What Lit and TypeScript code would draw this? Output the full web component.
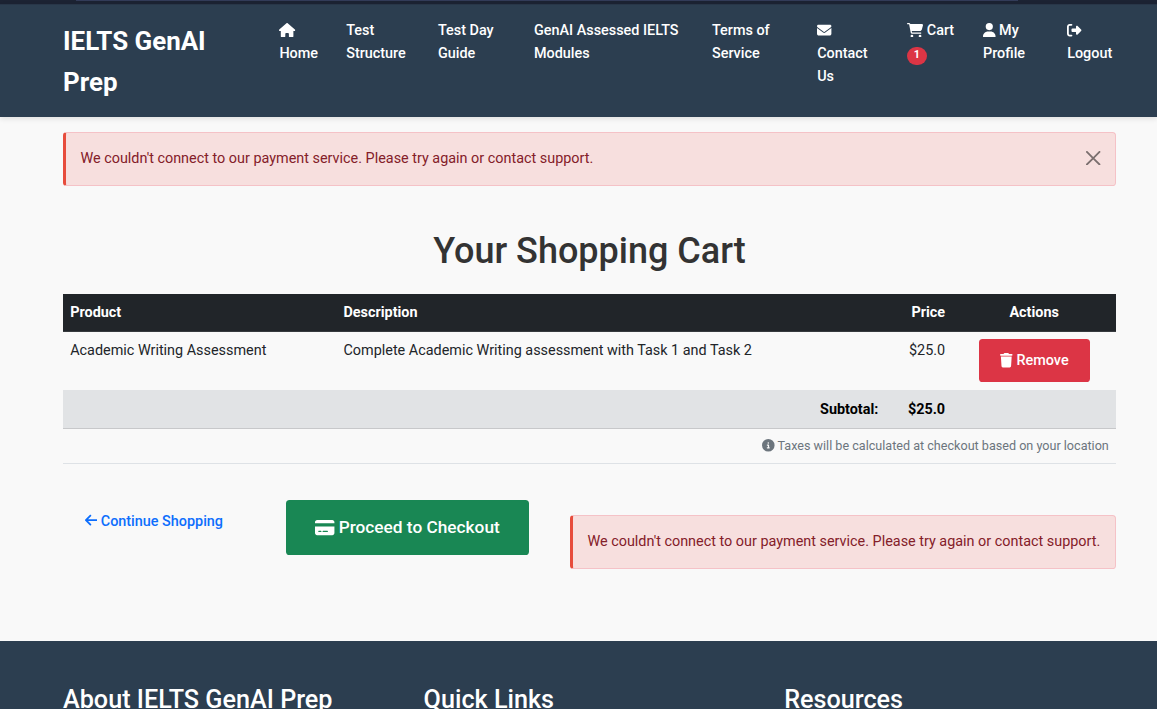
import { LitElement, html, css, svg } from "lit";
import { customElement, property } from "lit/decorators.js";

type Icon = { w: number; d: string };

const ICONS: Record<string, Icon> = {
  home: { w: 576, d: "M575.8 255.5c0 18-15 32.1-32 32.1h-32l.7 160.2c0 2.7-.2 5.4-.5 8.1V472c0 22.1-17.9 40-40 40H456c-1.1 0-2.2 0-3.3-.1c-1.4 .1-2.8 .1-4.2 .1H416 392c-22.1 0-40-17.9-40-40V448 384c0-17.7-14.3-32-32-32H256c-17.7 0-32 14.3-32 32v64 24c0 22.1-17.9 40-40 40H160 128.1c-1.5 0-3-.1-4.5-.2c-1.2 .1-2.4 .2-3.6 .2H104c-22.1 0-40-17.9-40-40V360c0-.9 0-1.9 .1-2.8V287.6H32c-18 0-32-14-32-32.1c0-9 3-17 10-24L266.4 8c7-7 15-8 22-8s15 2 21 7L564.8 231.5c8 7 12 15 11 24z" },
  envelope: { w: 512, d: "M48 64C21.5 64 0 85.5 0 112c0 15.1 7.1 29.3 19.2 38.4L236.8 313.6c11.4 8.5 27 8.5 38.4 0L492.8 150.4c12.1-9.1 19.2-23.3 19.2-38.4c0-26.5-21.5-48-48-48H48zM0 176V384c0 35.3 28.7 64 64 64H448c35.3 0 64-28.7 64-64V176L294.4 339.2c-22.8 17.1-54 17.1-76.8 0L0 176z" },
  cart: { w: 576, d: "M0 24C0 10.7 10.7 0 24 0H69.5c22 0 41.5 12.8 50.6 32h411c26.3 0 45.5 25 38.6 50.4l-41 152.3c-8.5 31.4-37 53.3-69.5 53.3H170.7l5.4 28.5c2.2 11.3 12.1 19.5 23.6 19.5H488c13.3 0 24 10.7 24 24s-10.7 24-24 24H199.7c-34.6 0-64.3-24.6-70.7-58.5L77.4 54.5c-.7-3.8-4-6.5-7.9-6.5H24C10.7 48 0 37.3 0 24zM128 464a48 48 0 1 1 96 0 48 48 0 1 1 -96 0zm336-48a48 48 0 1 1 0 96 48 48 0 1 1 0-96z" },
  user: { w: 448, d: "M224 256A128 128 0 1 0 224 0a128 128 0 1 0 0 256zm-45.7 48C79.8 304 0 383.8 0 482.3C0 498.7 13.3 512 29.7 512H418.3c16.4 0 29.7-13.3 29.7-29.7C448 383.8 368.2 304 269.7 304H178.3z" },
  logout: { w: 512, d: "M377.9 105.9L500.7 228.7c7.2 7.2 11.3 17.1 11.3 27.3s-4.1 20.1-11.3 27.3L377.9 406.1c-6.4 6.4-15 9.9-24 9.9c-18.7 0-33.9-15.2-33.9-33.9l0-62.1-128 0c-17.7 0-32-14.3-32-32l0-64c0-17.7 14.3-32 32-32l128 0 0-62.1c0-18.7 15.2-33.9 33.9-33.9c9 0 17.6 3.6 24 9.9zM160 96L96 96c-17.7 0-32 14.3-32 32l0 256c0 17.7 14.3 32 32 32l64 0c17.7 0 32 14.3 32 32s-14.3 32-32 32l-64 0c-53 0-96-43-96-96L0 128C0 75 43 32 96 32l64 0c17.7 0 32 14.3 32 32s-14.3 32-32 32z" },
  trash: { w: 448, d: "M135.2 17.7L128 32H32C14.3 32 0 46.3 0 64S14.3 96 32 96H416c17.7 0 32-14.3 32-32s-14.3-32-32-32H320l-7.2-14.3C307.4 6.8 296.3 0 284.2 0H163.8c-12.1 0-23.2 6.8-28.6 17.7zM416 128H32L53.2 467c1.6 25.3 22.6 45 47.9 45H346.9c25.3 0 46.3-19.7 47.9-45L416 128z" },
  arrow: { w: 448, d: "M9.4 233.4c-12.5 12.5-12.5 32.8 0 45.3l160 160c12.5 12.5 32.8 12.5 45.3 0s12.5-32.8 0-45.3L109.2 288 416 288c17.7 0 32-14.3 32-32s-14.3-32-32-32l-306.7 0L214.6 118.6c12.5-12.5 12.5-32.8 0-45.3s-32.8-12.5-45.3 0l-160 160z" },
  card: { w: 576, d: "M64 32C28.7 32 0 60.7 0 96v32H576V96c0-35.3-28.7-64-64-64H64zM576 224H0V416c0 35.3 28.7 64 64 64H512c35.3 0 64-28.7 64-64V224zM112 352h64c8.8 0 16 7.2 16 16s-7.2 16-16 16H112c-8.8 0-16-7.2-16-16s7.2-16 16-16zm112 16c0-8.8 7.2-16 16-16H368c8.8 0 16 7.2 16 16s-7.2 16-16 16H240c-8.8 0-16-7.2-16-16z" },
  info: { w: 512, d: "M256 512A256 256 0 1 0 256 0a256 256 0 1 0 0 512zM216 336h24V272H216c-13.3 0-24-10.7-24-24s10.7-24 24-24h48c13.3 0 24 10.7 24 24v88h8c13.3 0 24 10.7 24 24s-10.7 24-24 24H216c-13.3 0-24-10.7-24-24s10.7-24 24-24zm40-208a32 32 0 1 1 0 64 32 32 0 1 1 0-64z" },
};

@customElement("fa-icon")
class FaIcon extends LitElement {
  static styles = css`
    :host { display: inline-block; line-height: 1; height: 1em; vertical-align: -0.125em; }
    svg { display: block; height: 1em; width: auto; fill: currentColor; }
  `;
  @property() name = "home";
  render() {
    const icon = ICONS[this.name];
    return html`<svg viewBox="0 0 ${icon.w} 512">${svg`<path d=${icon.d}></path>`}</svg>`;
  }
}

@customElement("error-alert")
class ErrorAlert extends LitElement {
  static styles = css`
    :host { display: block; }
    .alert {
      box-sizing: border-box; height: 54px; display: flex; align-items: flex-start;
      justify-content: space-between; padding: 14px 14.4px;
      border: 1px solid #f5c2c7; border-left: 3px solid #e74c3c; border-radius: 3.6px;
      background: #f7dfde; color: #842029; white-space: nowrap;
    }
    .close { width: 14.4px; height: 14.4px; margin-top: 4px; fill: #000; opacity: .5; }
  `;
  @property({ type: Boolean }) dismissible = false;
  render() {
    return html`<div class="alert" role="alert">
      <span>We couldn't connect to our payment service. Please try again or contact support.</span>
      ${this.dismissible
        ? html`<svg class="close" viewBox="0 0 16 16"><path d="M.293.293a1 1 0 0 1 1.414 0L8 6.586 14.293.293a1 1 0 1 1 1.414 1.414L9.414 8l6.293 6.293a1 1 0 0 1-1.414 1.414L8 9.414l-6.293 6.293a1 1 0 0 1-1.414-1.414L6.586 8 .293 1.707a1 1 0 0 1 0-1.414z"/></svg>`
        : null}
    </div>`;
  }
}

@customElement("app-root")
class AppRoot extends LitElement {
  static styles = css`
    :host {
      display: block; height: 709px; overflow: hidden; background: #f9f9f9; color: #212529;
      font: 400 14.4px/23.04px Roboto, sans-serif;
    }
    .chrome { height: 4px; background: #1c2333; }
    .tab-edge { height: 1px; margin: 0 139px 0 76px; background: #323b58; }
    .nav {
      box-sizing: border-box; height: 113px; padding: 14.4px 0 0 63px; background: #2c3e50;
      border-top: 1px solid #283648; box-shadow: 0 2px 5px rgba(0,0,0,.1);
      display: grid; grid-template-columns: 216.4px 66.8px 91.8px 96px 178px 105.2px 89.8px 76px 84.2px 90px;
      color: #fff; font-weight: 500;
    }
    .brand { font-size: 25.92px; line-height: 41px; font-weight: 700; margin-top: 2px; }
    .badge {
      display: block; box-sizing: border-box; width: 20px; height: 18px; border-radius: 9px;
      margin-top: 5px; background: #dc3545; font-size: 10.8px; line-height: 15px; font-weight: 700;
      text-align: center;
    }
    .main { box-sizing: border-box; padding: 15px 41px 0 63px; height: 524px; }
    h1 { margin: 44px 0 21px; font-size: 36px; line-height: 43px; font-weight: 500; color: #333; text-align: center; }
    .row {
      display: grid; grid-template-columns: 273.3px 533px 83px 1fr; box-sizing: border-box;
    }
    .cell { padding: 7px 7.2px; }
    .right { text-align: right; }
    .head { height: 38px; background: #212529; color: #fff; font-weight: 700; border-bottom: 1px solid #373b3e; }
    .center { text-align: center; }
    .item { height: 58px; }
    .item .action { padding: 7px 26px 7px 26.7px; }
    .remove {
      height: 43px; border-radius: 3.6px; background: #dc3545; color: #fff; font-weight: 500;
      display: flex; align-items: center; justify-content: center; gap: 3.5px;
    }
    .subtotal { height: 39px; background: #e1e3e5; color: #000; font-weight: 700; border-bottom: 1px solid #c7c8ca; }
    .subtotal .cell { padding-top: 8px; }
    .subtotal .label { grid-column: 1 / 3; padding-right: 0; margin-right: -9px; }
    .tax {
      height: 35px; box-sizing: border-box; border-bottom: 1px solid #dee2e6; padding: 5px 7.2px;
      text-align: right; color: #6c757d; font-size: 12.6px;
    }
    .actions { display: flex; align-items: flex-start; margin-top: 36px; }
    .continue { box-sizing: border-box; width: 223px; flex: none; padding: 10px 0 0 21.6px; color: #0d6efd; font-weight: 500; }
    .checkout {
      width: 243px; flex: none; height: 55px; border-radius: 3.6px; background: #198754; color: #fff;
      font-size: 17.28px; font-weight: 500; display: flex; align-items: center; justify-content: center; gap: 4px;
    }
    .inline-alert { flex: 1; margin: 15px 0 0 41px; }
    .footer {
      height: 83px; box-sizing: border-box; padding: 44px 0 0 63px; background: #2c3e50; color: #fff;
      display: grid; grid-template-columns: 360.6px 360.6px 1fr; white-space: nowrap;
      font-size: 25.2px; line-height: 30px; font-weight: 500;
    }
  `;

  render() {
    return html`
      <div class="chrome"><div class="tab-edge"></div></div>
      <nav class="nav">
        <div class="brand">IELTS GenAI<br />Prep</div>
        <div><fa-icon name="home"></fa-icon><br />Home</div>
        <div>Test<br />Structure</div>
        <div>Test Day<br />Guide</div>
        <div>GenAI Assessed IELTS<br />Modules</div>
        <div>Terms of<br />Service</div>
        <div><fa-icon name="envelope"></fa-icon><br />Contact<br />Us</div>
        <div><fa-icon name="cart"></fa-icon> Cart<span class="badge">1</span></div>
        <div><fa-icon name="user"></fa-icon> My<br />Profile</div>
        <div><fa-icon name="logout"></fa-icon><br />Logout</div>
      </nav>
      <main class="main">
        <error-alert dismissible></error-alert>
        <h1>Your Shopping Cart</h1>
        <div class="row head">
          <div class="cell">Product</div>
          <div class="cell">Description</div>
          <div class="cell right">Price</div>
          <div class="cell center">Actions</div>
        </div>
        <div class="row item">
          <div class="cell">Academic Writing Assessment</div>
          <div class="cell">Complete Academic Writing assessment with Task 1 and Task 2</div>
          <div class="cell right">$25.0</div>
          <div class="action"><div class="remove"><fa-icon name="trash"></fa-icon>Remove</div></div>
        </div>
        <div class="row subtotal">
          <div class="cell label right">Subtotal:</div>
          <div class="cell right">$25.0</div>
        </div>
        <div class="tax"><fa-icon name="info"></fa-icon> Taxes will be calculated at checkout based on your location</div>
        <div class="actions">
          <div class="continue"><fa-icon name="arrow"></fa-icon> Continue Shopping</div>
          <div class="checkout"><fa-icon name="card"></fa-icon>Proceed to Checkout</div>
          <error-alert class="inline-alert"></error-alert>
        </div>
      </main>
      <footer class="footer">
        <div>About IELTS GenAI Prep</div>
        <div>Quick Links</div>
        <div>Resources</div>
      </footer>
    `;
  }
}
